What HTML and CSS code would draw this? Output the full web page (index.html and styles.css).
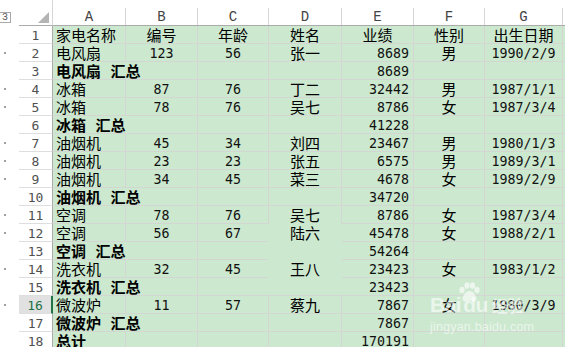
FILE: index.html
```html
<!DOCTYPE html>
<html lang="zh">
<head>
<meta charset="utf-8">
<title>分类汇总</title>
<link rel="stylesheet" href="styles.css">
</head>
<body>
<div class="sheet">
  <div class="ol hd"><span class="lvl">3</span></div>
  <div class="corner"><svg width="11" height="11" viewBox="0 0 11 11"><polygon points="11,0 11,11 0,11" fill="#b4b4b4"/></svg></div>
  <div class="ch"><span>A</span></div>
  <div class="ch"><span>B</span></div>
  <div class="ch"><span>C</span></div>
  <div class="ch"><span>D</span></div>
  <div class="ch"><span>E</span></div>
  <div class="ch"><span>F</span></div>
  <div class="ch"><span>G</span></div>
  <div class="ch last"><span></span></div>

  <div class="ol"></div><div class="rh">1</div>
  <div class="c t">家电名称</div><div class="c tc">编号</div><div class="c tc">年龄</div><div class="c tc">姓名</div><div class="c tc">业绩</div><div class="c tc">性别</div><div class="c tc">出生日期</div><div class="c"></div>

  <div class="ol"><i></i></div><div class="rh">2</div>
  <div class="c t">电风扇</div><div class="c n">123</div><div class="c n">56</div><div class="c tc">张一</div><div class="c r">8689</div><div class="c tc">男</div><div class="c n">1990/2/9</div><div class="c"></div>

  <div class="ol"></div><div class="rh">3</div>
  <div class="c t b s2">电风扇 汇总</div><div class="c"></div><div class="c"></div><div class="c r">8689</div><div class="c"></div><div class="c"></div><div class="c"></div>

  <div class="ol"><i></i></div><div class="rh">4</div>
  <div class="c t">冰箱</div><div class="c n">87</div><div class="c n">76</div><div class="c tc">丁二</div><div class="c r">32442</div><div class="c tc">男</div><div class="c n">1987/1/1</div><div class="c"></div>

  <div class="ol"><i></i></div><div class="rh">5</div>
  <div class="c t">冰箱</div><div class="c n">78</div><div class="c n">76</div><div class="c tc">吴七</div><div class="c r">8786</div><div class="c tc">女</div><div class="c n">1987/3/4</div><div class="c"></div>

  <div class="ol"></div><div class="rh">6</div>
  <div class="c t b s2">冰箱 汇总</div><div class="c"></div><div class="c"></div><div class="c r">41228</div><div class="c"></div><div class="c"></div><div class="c"></div>

  <div class="ol"><i></i></div><div class="rh">7</div>
  <div class="c t">油烟机</div><div class="c n">45</div><div class="c n">34</div><div class="c tc">刘四</div><div class="c r">23467</div><div class="c tc">男</div><div class="c n">1980/1/3</div><div class="c"></div>

  <div class="ol"><i></i></div><div class="rh">8</div>
  <div class="c t">油烟机</div><div class="c n">23</div><div class="c n">23</div><div class="c tc">张五</div><div class="c r">6575</div><div class="c tc">男</div><div class="c n">1989/3/1</div><div class="c"></div>

  <div class="ol"><i></i></div><div class="rh">9</div>
  <div class="c t">油烟机</div><div class="c n">34</div><div class="c n">45</div><div class="c tc">菜三</div><div class="c r">4678</div><div class="c tc">女</div><div class="c n">1989/2/9</div><div class="c"></div>

  <div class="ol"></div><div class="rh">10</div>
  <div class="c t b s2">油烟机 汇总</div><div class="c"></div><div class="c"></div><div class="c r">34720</div><div class="c"></div><div class="c"></div><div class="c"></div>

  <div class="ol"><i></i></div><div class="rh">11</div>
  <div class="c t">空调</div><div class="c n">78</div><div class="c n">76</div><div class="c tc nb">吴七</div><div class="c r">8786</div><div class="c tc">女</div><div class="c n">1987/3/4</div><div class="c"></div>

  <div class="ol"><i></i></div><div class="rh">12</div>
  <div class="c t">空调</div><div class="c n">56</div><div class="c n nr">67</div><div class="c tc nb nr">陆六</div><div class="c r">45478</div><div class="c tc">女</div><div class="c n">1988/2/1</div><div class="c"></div>

  <div class="ol"></div><div class="rh">13</div>
  <div class="c t b s2">空调 汇总</div><div class="c nr"></div><div class="c nb nr"></div><div class="c r">54264</div><div class="c"></div><div class="c"></div><div class="c"></div>

  <div class="ol"><i></i></div><div class="rh">14</div>
  <div class="c t">洗衣机</div><div class="c n">32</div><div class="c n nr">45</div><div class="c tc nb nr">王八</div><div class="c r">23423</div><div class="c tc">女</div><div class="c n">1983/1/2</div><div class="c"></div>

  <div class="ol"></div><div class="rh">15</div>
  <div class="c t b s2">洗衣机 汇总</div><div class="c nr"></div><div class="c nr"></div><div class="c r">23423</div><div class="c"></div><div class="c"></div><div class="c"></div>

  <div class="ol"><i></i></div><div class="rh sel">16</div>
  <div class="c t">微波炉</div><div class="c n">11</div><div class="c n">57</div><div class="c tc">蔡九</div><div class="c r">7867</div><div class="c tc">女</div><div class="c n">1980/3/9</div><div class="c"></div>

  <div class="ol"></div><div class="rh">17</div>
  <div class="c t b s2">微波炉 汇总</div><div class="c"></div><div class="c"></div><div class="c r">7867</div><div class="c"></div><div class="c"></div><div class="c"></div>

  <div class="ol"></div><div class="rh">18</div>
  <div class="c t b">总计</div><div class="c"></div><div class="c"></div><div class="c"></div><div class="c r">170191</div><div class="c"></div><div class="c"></div><div class="c"></div>
</div>

<div class="wm">
  <div class="wm-logo"><span>Bai</span><svg class="paw" width="24" height="20" viewBox="0 0 24 20"><ellipse cx="5" cy="8" rx="2.6" ry="3.2"/><ellipse cx="10" cy="3.5" rx="2.6" ry="3.2"/><ellipse cx="15.5" cy="3.5" rx="2.6" ry="3.2"/><ellipse cx="20" cy="8" rx="2.6" ry="3.2"/><path d="M12.5 9c-4 0-7 5-7 8 0 2 2 3 3.5 2.5 1.5-.4 2.5-.8 3.5-.8s2 .4 3.5.8C17.5 20 19.5 19 19.5 17c0-3-3-8-7-8z"/></svg><span>du</span><span class="jy">经验</span></div>
  <div class="wm-url">jingyan.baidu.com</div>
</div>
</body>
</html>
```

FILE: styles.css
```css
html, body {
  margin: 0;
  padding: 0;
  background: #ffffff;
  overflow: hidden;
}

.sheet {
  display: grid;
  grid-template-columns: 19px 34px 73px 72px 71px 73px 72px 71px 78px 1fr;
  grid-template-rows: 26px repeat(18, 18px);
  width: 565px;
  font-family: "Noto Sans CJK SC", sans-serif;
  font-size: 15px;
  line-height: 16px;
  color: #000;
}

/* outline gutter */
.ol {
  display: flex;
  align-items: center;
  background: #fff;
}
.ol i {
  display: block;
  width: 2px;
  height: 2px;
  margin-left: 4px;
  background: #a0a0a0;
}
.ol.hd {
  align-items: flex-start;
}
.lvl {
  box-sizing: border-box;
  width: 11px;
  height: 11px;
  margin-top: 12px;
  border: 1px solid #a8a8a8;
  border-left: none;
  font-family: "Liberation Mono", monospace;
  font-size: 10px;
  line-height: 9px;
  color: #555;
  text-align: center;
}

.corner {
  box-sizing: border-box;
  display: flex;
  justify-content: flex-end;
  align-items: flex-start;
  padding: 12px 3px 0 0;
  border-bottom: 1px solid #ababab;
  border-right: 1px solid #d6d6d6;
  background: #fff;
}

/* column headers */
.ch {
  box-sizing: border-box;
  padding-top: 8px;
  border-bottom: 1px solid #ababab;
  background: #fff;
}
.ch span {
  box-sizing: border-box;
  display: block;
  height: 17px;
  border-right: 1px solid #d6d6d6;
  font-family: "Liberation Mono", monospace;
  font-size: 14px;
  line-height: 18px;
  color: #444;
  text-align: center;
}
.ch.last span {
  border-right: none;
}

/* row headers */
.rh {
  box-sizing: border-box;
  display: flex;
  align-items: center;
  justify-content: center;
  border-bottom: 1px solid #dedede;
  border-right: 1px solid #ababab;
  background: #fff;
  font-family: "DejaVu Sans Mono", monospace;
  font-size: 13px;
  line-height: 15px;
  color: #505050;
  padding-top: 1px;
}
.rh.sel {
  background: #e1e1e1;
  color: #217346;
  border-right: 2px solid #217346;
}

/* cells */
.c {
  box-sizing: border-box;
  display: flex;
  align-items: center;
  padding: 0 3px;
  white-space: nowrap;
  background: #cce8cf;
  border-right: 1px solid #d3d6d3;
  border-bottom: 1px solid #d3d6d3;
  overflow: visible;
}
.t {
  justify-content: flex-start;
}
.tc {
  justify-content: center;
}
.n, .r {
  font-family: "DejaVu Sans Mono", monospace;
  font-size: 13.3px;
  line-height: 15px;
  padding-top: 1px;
  color: #111;
}
.n {
  justify-content: center;
}
.r {
  justify-content: flex-end;
  padding-right: 4px;
}
.b {
  font-weight: 700;
  word-spacing: 6px;
}
.s2 {
  grid-column: span 2;
}
.nb {
  border-bottom-color: #cce8cf;
}
.nr {
  border-right-color: #cce8cf;
}

/* watermark overlay */
.wm {
  position: absolute;
  left: 430px;
  top: 284px;
  width: 110px;
  color: rgba(255, 255, 255, 0.62);
  pointer-events: none;
}
.wm-logo {
  display: flex;
  align-items: flex-end;
  height: 32px;
  font-family: "Liberation Sans", sans-serif;
  font-weight: 700;
  font-size: 21px;
  line-height: 22px;
  letter-spacing: -0.5px;
}
.paw {
  fill: rgba(255, 255, 255, 0.62);
  margin: 0 -18px 14px -4px;
  flex: none;
}
.wm-logo .jy {
  font-family: "Noto Sans CJK SC", sans-serif;
  font-size: 16px;
  line-height: 18px;
  font-weight: 700;
  margin-left: 4px;
  margin-bottom: 2px;
  letter-spacing: 0;
}
.wm-url {
  margin-top: 4px;
  font-family: "Liberation Sans", sans-serif;
  font-size: 12.5px;
  line-height: 14px;
  letter-spacing: 0.2px;
}
```
